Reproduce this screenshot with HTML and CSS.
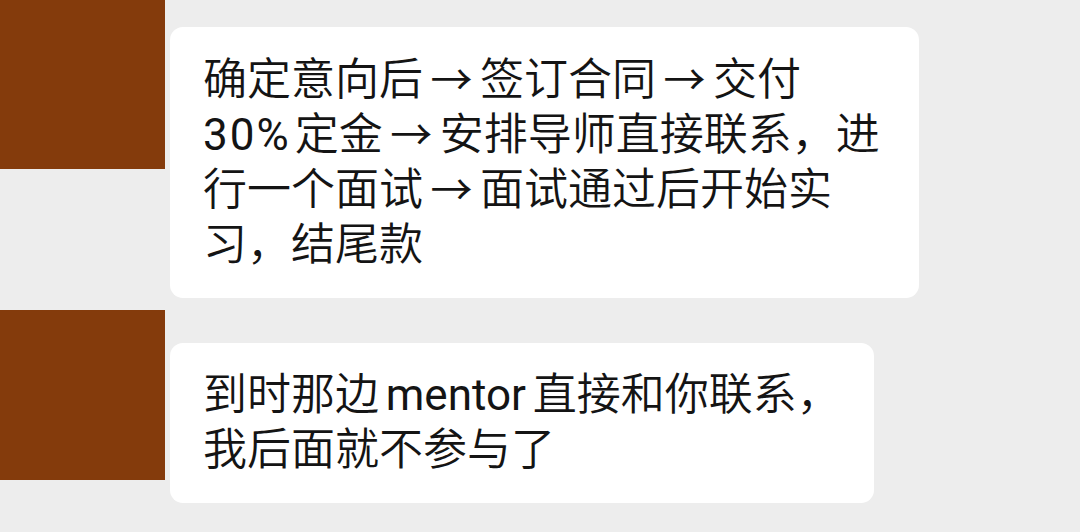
FILE: index.html
```html
<!DOCTYPE html>
<html lang="zh-CN">
<head>
    <meta charset="UTF-8">
    <meta name="viewport" content="width=device-width, initial-scale=1.0">
    <title>聊天记录</title>
    <link rel="stylesheet" href="styles.css">
</head>
<body>

<div class="chat">
    <div class="msg-row first">
        <div class="avatar"></div>
        <div class="bubble">
            确定意向后<span class="arrow">→</span>签订合同<span class="arrow">→</span>交付<br>
            <span class="latin pct">30%</span>定金<span class="arrow">→</span>安排导师直接联系，进<br>
            行一个面试<span class="arrow">→</span>面试通过后开始实<br>
            习，结尾款
        </div>
    </div>

    <div class="msg-row second">
        <div class="avatar"></div>
        <div class="bubble">
            到时那边 <span class="latin">mentor</span> 直接和你联系，<br>
            我后面就不参与了
        </div>
    </div>
</div>

</body>
</html>
```

FILE: styles.css
```css
body {
    margin: 0;
    background-color: #ededed;
    font-family: Roboto, "Noto Sans CJK SC", sans-serif;
    overflow: hidden;
}
.chat {
    display: flex;
    flex-direction: column;
}
.msg-row {
    display: flex;
    align-items: flex-start;
    gap: 5px;
}
.avatar {
    width: 165px;
    height: 170px;
    flex-shrink: 0;
    background-color: #843b0c;
}
.bubble {
    background: white;
    border-radius: 13px;
    padding: 25px 33px 25px 33px;
    font-size: 44px;
    font-weight: 350;
    line-height: 55px;
    color: #141414;
    white-space: nowrap;
    word-spacing: -4px;
}
.latin {
    font-weight: 400;
}
.pct {
    letter-spacing: 2px;
    margin-right: 4px;
}
.arrow {
    display: inline-block;
    width: 57px;
    text-align: center;
    font-family: "Noto Sans CJK SC", sans-serif;
    font-size: 42px;
    font-weight: 400;
    line-height: 1;
}
.first .avatar {
    height: 169px;
}
.first .bubble {
    margin-top: 27px;
    padding-top: 26px;
    padding-right: 39px;
}
.second {
    margin-top: 12px;
}
.second .bubble {
    margin-top: 33px;
}
```
